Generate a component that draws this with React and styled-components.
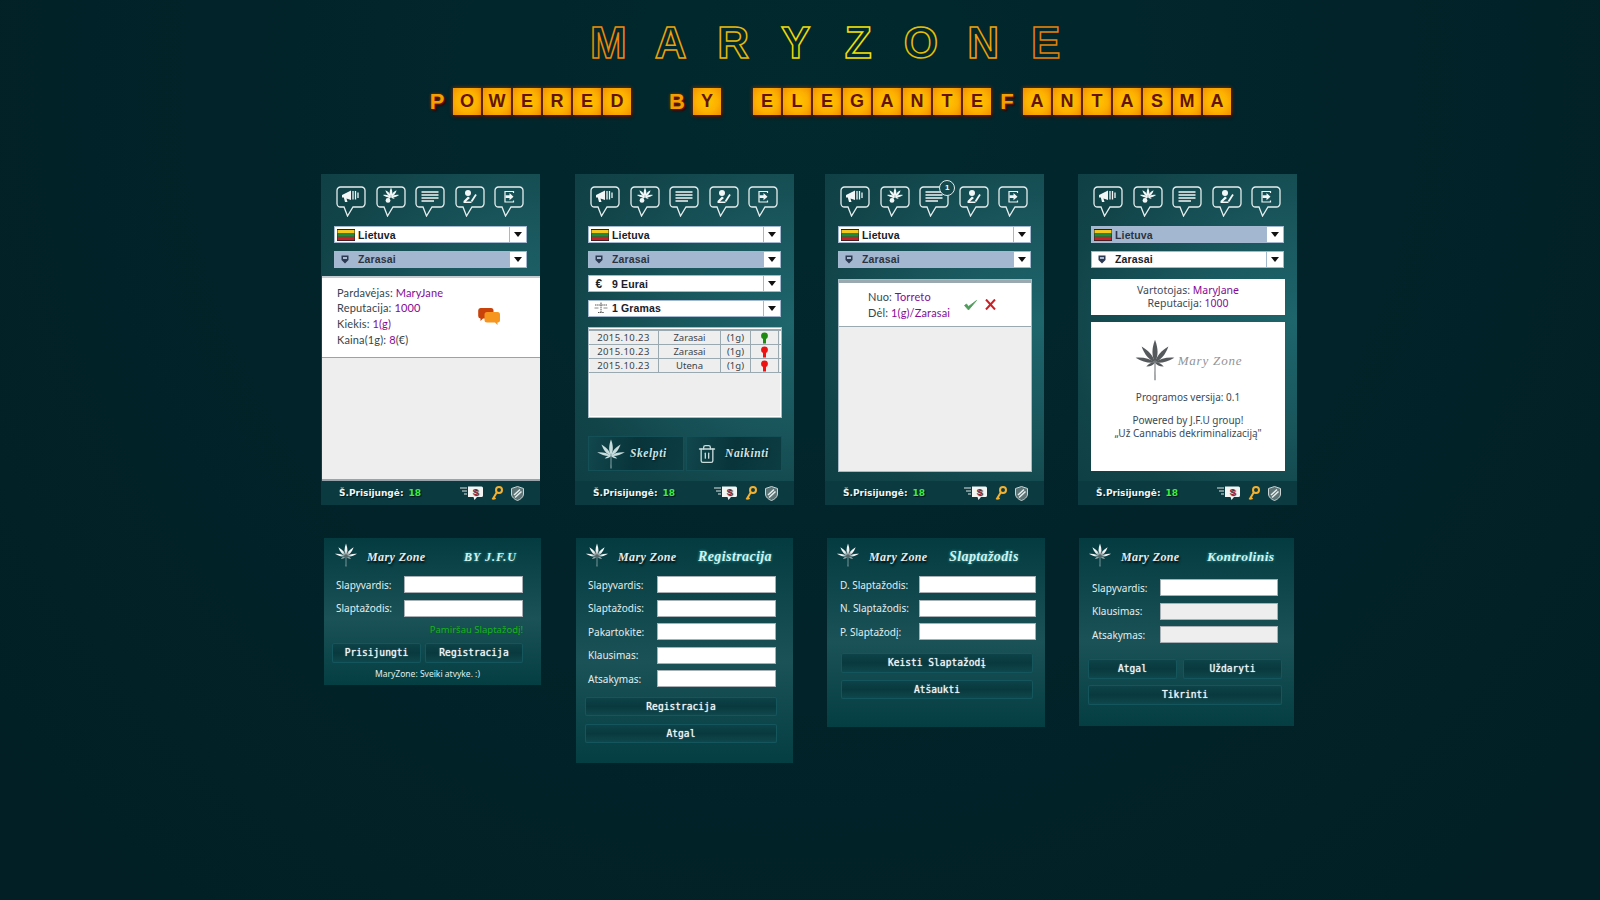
import React from 'react'
import styled, { createGlobalStyle } from 'styled-components'
import { Trash2 } from 'lucide-react'

const GlobalStyle = createGlobalStyle`
  html, body {
    margin: 0;
    padding: 0;
    background: #01252a;
  }
  * {
    box-sizing: border-box;
  }
`

const Page = styled.div`
  width: 1600px;
  height: 900px;
  overflow: hidden;
  padding-top: 27px;
  background: radial-gradient(ellipse at 50% 10%, #012a2e 0%, #01242a 45%, #011f24 100%);
  font-family: 'Noto Sans', 'Liberation Sans', sans-serif;
`

/* ---------- banner ---------- */

const TitleRow = styled.div`
  display: flex;
  height: 32px;
  padding-left: 577px;
`

const TitleLetter = styled.span`
  width: 62.5px;
  text-align: center;
  font-family: 'Liberation Sans', sans-serif;
  font-weight: 700;
  font-size: 44px;
  line-height: 32px;
  color: transparent;
  -webkit-text-stroke: 1.5px ${(p) => p.$color};
`

const SubRow = styled.div`
  display: flex;
  height: 27px;
  margin-top: 29px;
  padding-left: 422px;
  font-family: 'Liberation Sans', sans-serif;
  font-weight: 700;
`

const Cell = styled.span`
  width: 30px;
  display: flex;
  justify-content: center;
`

const Tile = styled.span`
  width: 28px;
  height: 27px;
  text-align: center;
  font-size: 18px;
  line-height: 27px;
  color: #641300;
  background: radial-gradient(circle at 50% 50%, #ffc600 0%, #fdb000 55%, #f09000 100%);
  box-shadow: 0 0 4px #a83200, 1px 2px 3px #320000;
`

const BareLetter = styled.span`
  font-size: 22px;
  line-height: 27px;
  color: #f4a000;
  text-shadow: 1px 1px 0 #641300, 0 0 3px #a83200, 2px 2px 2px #320000;
`

/* ---------- shared layout ---------- */

const CardRow = styled.div`
  display: grid;
  grid-template-columns: ${(p) => p.$cols};
  align-items: start;
  margin-top: ${(p) => p.$top}px;
  padding-left: ${(p) => p.$left}px;
`

const Phone = styled.div`
  display: flex;
  flex-direction: column;
  width: 219px;
  height: 331px;
  padding-top: 12px;
  background: radial-gradient(ellipse at 100% 45%, #1e656c 0%, #19565c 40%, #114449 75%, #0e3e43 100%);
`

const IconRow = styled.div`
  display: flex;
  gap: 9.6px;
  padding-left: 15px;
  height: 31px;
`

const BubbleWrap = styled.div`
  position: relative;
  width: 30px;
  height: 31px;
`

const Badge = styled.span`
  position: absolute;
  top: -6px;
  right: -6px;
  width: 16px;
  height: 16px;
  border-radius: 50%;
  background: #14494e;
  border: 1.5px solid #dfe9e9;
  color: #fff;
  font: 700 8px/13px 'Liberation Sans', sans-serif;
  text-align: center;
`

const Selects = styled.div`
  display: flex;
  flex-direction: column;
  gap: 7.5px;
  margin: 9px 0 0 13px;
  width: 193px;
`

const SelectBox = styled.div`
  display: flex;
  height: 17px;
  border: 1.5px solid #a4b9d0;
  background: #fff;
`

const SelectValue = styled.div`
  flex: 1;
  display: flex;
  align-items: center;
  gap: 3px;
  padding-left: ${(p) => (p.$hasFlag ? 2 : 5)}px;
  background: ${(p) => (p.$selected ? '#a3b8d0' : '#fff')};
  border-right: 1.5px solid #a4b9d0;
  color: ${(p) => (p.$selected ? '#2c3340' : '#1a2028')};
  font: 700 10.5px 'Liberation Sans', sans-serif;
  letter-spacing: 0.15px;
`

const SelectIcon = styled.span`
  display: flex;
  justify-content: center;
  align-items: center;
  width: ${(p) => p.$w}px;
  margin-right: ${(p) => p.$gap}px;
  color: #222;
  font-size: 12px;
`

const Arrow = styled.div`
  display: flex;
  align-items: center;
  justify-content: center;
  width: 16px;
  &::after {
    content: '';
    border-left: 4.5px solid transparent;
    border-right: 4.5px solid transparent;
    border-top: 5px solid #111;
  }
`

const Footer = styled.div`
  display: flex;
  align-items: center;
  height: 24px;
  margin-top: auto;
  padding: 0 16px 0 18px;
  background: #0b3b40;
  color: #eef5f5;
  font: 700 9px 'DejaVu Sans', sans-serif;
  text-shadow: 1px 1px 1px #02181b;
`

const Online = styled.span`
  margin-left: 5px;
  color: #3df03d;
`

const FooterIcons = styled.div`
  display: flex;
  align-items: center;
  gap: 8px;
  margin-left: auto;
`

/* ---------- phone bodies ---------- */

const ListBody = styled.div`
  flex: 1;
  display: flex;
  flex-direction: column;
  margin: 8.5px 0 0 1px;
  background: #eeeeee;
  border-top: 2px solid #c4ccd2;
  border-bottom: 2px solid #97a4ab;
`

const Offer = styled.div`
  display: flex;
  align-items: center;
  height: 80px;
  padding: 0 40px 3px 15px;
  background: #fff;
  border-bottom: 1px solid #97a4ab;
`

const ScriptText = styled.div`
  font: 400 11px/15.7px 'Lato', 'Noto Sans', sans-serif;
  letter-spacing: 0.15px;
  color: #33464f;
`

const Accent = styled.span`
  color: #860a96;
`

const SideIcon = styled.div`
  margin-left: auto;
  display: flex;
`

const Table = styled.div`
  margin: 10.5px 12px 0 13px;
  height: 91px;
  padding-top: 1px;
  background: #eeeeee;
  border: 1.5px solid #a9bac6;
  box-shadow: inset 0 0 0 1px #fff;
`

const TableRow = styled.div`
  display: grid;
  grid-template-columns: 70px 62px 30px 28px;
  height: ${(p) => (p.$first ? 16 : 14)}px;
  border-top: ${(p) => (p.$first ? '2px solid #9aa8b0' : 'none')};
  border-bottom: 1.5px solid #9aa8b0;
`

const TableCell = styled.div`
  display: flex;
  align-items: center;
  justify-content: center;
  border-right: 1.5px solid #9aa8b0;
  color: #3a4248;
  font-size: 9.5px;
  letter-spacing: ${(p) => (p.$wide ? 0.4 : 0)}px;
`

const ActionRow = styled.div`
  display: grid;
  grid-template-columns: 96px 96px;
  gap: 2px;
  margin: 18px 0 0 13px;
`

const ActionButton = styled.div`
  display: flex;
  align-items: center;
  gap: ${(p) => p.$gap}px;
  height: 35px;
  padding-left: ${(p) => p.$pad}px;
  background: linear-gradient(100deg, #11474d 0%, #08343a 50%, #0c3d43 100%);
  border: 1px solid #155057;
  color: #cfe4e4;
`

const ButtonScript = styled.span`
  font: italic 700 11.5px 'Liberation Serif', serif;
  letter-spacing: 0.6px;
  text-shadow: 1px 1px 2px #021c20;
  margin-bottom: 2px;
`

const RequestPanel = styled.div`
  flex: 1;
  display: flex;
  flex-direction: column;
  margin: 11.5px 12px 9px 13px;
  background: #eeeeee;
  border: 1px solid #a9bac6;
`

const Request = styled.div`
  display: flex;
  align-items: center;
  height: 47px;
  padding-left: 29px;
  background: #fff;
  border-top: 3px solid #9aa8b0;
  border-bottom: 1.5px solid #9aa8b0;
`

const RequestIcons = styled.div`
  display: flex;
  gap: 8px;
  margin: 0 0 0 14px;
`

const AboutColumn = styled.div`
  flex: 1;
  display: flex;
  flex-direction: column;
  gap: 7px;
  margin: 11.5px 12px 9px 13px;
`

const WhiteBox = styled.div`
  display: flex;
  flex-direction: column;
  align-items: center;
  justify-content: ${(p) => (p.$center ? 'center' : 'flex-start')};
  height: ${(p) => p.$h}px;
  padding-top: ${(p) => p.$top || 0}px;
  background: #fff;
  color: #3b4a55;
  font-size: 10.5px;
  line-height: 13.5px;
`

const AboutLogo = styled.div`
  display: flex;
  align-items: center;
  gap: 2px;
  height: 39px;
  padding-right: 0;
`

const AboutName = styled.span`
  font: italic 400 13px 'Liberation Serif', serif;
  letter-spacing: 0.8px;
  color: #8f9497;
  margin-top: 3px;
`

const AboutLine = styled.div`
  margin-top: ${(p) => p.$top}px;
  font-size: 10px;
`

/* ---------- login style cards ---------- */

const MiniCard = styled.div`
  width: ${(p) => p.$w}px;
  height: ${(p) => p.$h}px;
  background: linear-gradient(180deg, #033b40 0%, #1a5257 55%, #053e42 100%);
`

const MiniHead = styled.div`
  display: flex;
  align-items: center;
  height: ${(p) => p.$h}px;
  padding: 0 0 ${(p) => p.$h - 38}px ${(p) => p.$left}px;
  & > svg {
    margin-bottom: 5px;
  }
`

const BrandName = styled.span`
  margin-left: 9px;
  width: ${(p) => p.$w}px;
  font: italic 700 12px 'Liberation Serif', serif;
  letter-spacing: 0.4px;
  color: #e5ecec;
  text-shadow: 1px 2px 2px #010f11;
`

const MiniTitle = styled.span`
  font: italic 700 ${(p) => p.$size}px 'Liberation Serif', serif;
  letter-spacing: ${(p) => p.$spacing}px;
  color: #d4f2ef;
  text-shadow: 0 0 3px #33b5b5;
`

const Form = styled.div`
  display: flex;
  flex-direction: column;
  gap: 6.5px;
  padding-left: ${(p) => p.$left}px;
`

const FormRow = styled.div`
  display: grid;
  grid-template-columns: ${(p) => p.$label}px ${(p) => p.$input}px;
  align-items: center;
  height: 17px;
`

const Label = styled.span`
  color: #e2eeee;
  font-size: 10px;
`

const Input = styled.input`
  width: 100%;
  height: 17px;
  padding: 0;
  border: 1px solid #a9b0b5;
  border-radius: 0;
  background: ${(p) => (p.disabled ? '#eeeeee' : '#fff')};
`

const Forgot = styled.div`
  height: 14px;
  margin-top: 6px;
  padding-right: 18px;
  text-align: right;
  color: #17b317;
  font-size: 9.5px;
  line-height: 14px;
`

const ButtonStack = styled.div`
  display: grid;
  grid-template-columns: ${(p) => p.$cols};
  gap: ${(p) => p.$gap}px;
  margin-top: ${(p) => p.$top}px;
  padding-left: ${(p) => p.$left}px;
`

const WideButton = styled.div`
  grid-column: ${(p) => (p.$full ? '1 / -1' : 'auto')};
  height: ${(p) => p.$h}px;
  text-align: center;
  background: linear-gradient(180deg, #0d444a 0%, #08393e 50%, #10494e 100%);
  box-shadow: inset 0 0 0 1px #15565c;
  border-radius: 2px;
  color: #eef5f5;
  font: 400 9.6px/${(p) => p.$h}px 'DejaVu Sans Mono', monospace;
  text-shadow: 0 0 1px #eef5f5;
`

const Welcome = styled.div`
  margin-top: 5px;
  text-align: center;
  color: #dfeeee;
  font-size: 8.5px;
  padding-right: 10px;
`

/* ---------- drawings ---------- */

const blades = [
  [0, 1, 0.15],
  [-40, 0.92, 0.13],
  [40, 0.92, 0.13],
  [-76, 0.88, 0.11],
  [76, 0.88, 0.11],
  [-114, 0.42, 0.08],
  [114, 0.42, 0.08],
]

const bladePath = (len, w) =>
  `M0 0C${w} ${-len * 0.3} ${w} ${-len * 0.6} 0 ${-len}C${-w} ${-len * 0.6} ${-w} ${-len * 0.3} 0 0Z`

const Leaf = ({ size, fill = '#55595c', silver }) => (
  <svg width={size} height={size} viewBox="-50 -56 100 100">
    {silver && (
      <defs>
        <radialGradient id="leafSilver" gradientUnits="userSpaceOnUse" cx="0" cy="0" r="50">
          <stop offset="0" stopColor="#4d5456" />
          <stop offset="0.45" stopColor="#e9eeee" />
          <stop offset="1" stopColor="#ffffff" />
        </radialGradient>
      </defs>
    )}
    {blades.map(([angle, len, w]) => (
      <path
        key={angle}
        transform={`rotate(${angle})`}
        d={bladePath(54 * len, 54 * w)}
        fill={silver ? 'url(#leafSilver)' : fill}
      />
    ))}
    <path d="M-1 0L1 0L1.2 42L-1.2 42Z" fill={silver ? '#dfe6e6' : fill} />
  </svg>
)

const glyphs = {
  megaphone: (
    <>
      <path d="M6 9L15 4.5V14L10.5 12.5L11.5 16H9L7.8 11.6L6 11.5Z" fill="#f2f6f6" />
      <path d="M17 5V13.5M19.5 5V13.5M22 6.5V12" stroke="#f2f6f6" strokeWidth="1.3" />
    </>
  ),
  leaf: (
    <g transform="translate(15 11)">
      {blades.map(([angle, len, w]) => (
        <path key={angle} transform={`rotate(${angle})`} d={bladePath(9.5 * len, 12 * w)} fill="#f2f6f6" />
      ))}
      <circle cx="-3" cy="3.4" r="2.4" fill="#f2f6f6" />
    </g>
  ),
  lines: <path d="M6.5 6H23.5M6.5 9H23.5M6.5 12H23.5M6.5 15H19" stroke="#f2f6f6" strokeWidth="1.3" />,
  person: (
    <>
      <circle cx="13" cy="7" r="3" fill="#f2f6f6" />
      <path d="M13 10.5L15 12L11 15.5H16.5V17H8.5V15Z" fill="#f2f6f6" />
      <path d="M21 8.5L16.5 15.5" stroke="#f2f6f6" strokeWidth="1.8" />
    </>
  ),
  exit: (
    <>
      <path d="M19.5 7V5.5H11V16H19.5V14.5" fill="none" stroke="#f2f6f6" strokeWidth="1.2" />
      <path d="M11.5 9.2H15.5V7L19.5 10.7L15.5 14.2V12H11.5Z" fill="#f2f6f6" />
    </>
  ),
}

const Bubble = ({ glyph, badge }) => (
  <BubbleWrap>
    <svg width="30" height="31" viewBox="0 0 30 31">
      <path
        d="M4.5 1H25.5A3.5 3.5 0 0 1 29 4.5V17.5A3.5 3.5 0 0 1 25.5 21H17L11.5 30L8 21H4.5A3.5 3.5 0 0 1 1 17.5V4.5A3.5 3.5 0 0 1 4.5 1Z"
        fill="none"
        stroke="#e6eeee"
        strokeWidth="1.3"
      />
      {glyphs[glyph]}
    </svg>
    {badge && <Badge>{badge}</Badge>}
  </BubbleWrap>
)

const FlagIcon = () => (
  <svg width="18" height="12" viewBox="0 0 18 12">
    <rect width="18" height="12" fill="#222" />
    <rect x="0.5" y="1" width="17" height="3.4" fill="#f2c81e" />
    <rect x="0.5" y="4.4" width="17" height="3.4" fill="#1e8a3c" />
    <rect x="0.5" y="7.8" width="17" height="3.4" fill="#c8202a" />
  </svg>
)

const CityShield = () => (
  <svg width="8" height="9" viewBox="0 0 8 9">
    <path d="M0.5 0.5H7.5V5L4 8.5L0.5 5Z" fill="#2b3a52" />
    <rect x="2" y="2" width="4" height="2" fill="#a9bcd2" />
  </svg>
)

const ScaleIcon = () => (
  <svg width="14" height="12" viewBox="0 0 14 12">
    <path d="M7 0.5V10M4 10.5H10M1 3H13" stroke="#555" strokeWidth="1" strokeDasharray="1.5 0.6" fill="none" />
    <path d="M0.5 6H4.5M9.5 6H13.5" stroke="#888" strokeWidth="1" />
  </svg>
)

const ChatIcon = () => (
  <svg width="22" height="19" viewBox="0 0 22 19">
    <path d="M2.5 1H13A2.5 2.5 0 0 1 15.5 3.5V9A2.5 2.5 0 0 1 13 11.5H5L2.5 14V11.5A2.5 2.5 0 0 1 0.2 9V3.5A2.5 2.5 0 0 1 2.5 1Z" fill="#c8420a" />
    <path d="M9 5H19.5A2.5 2.5 0 0 1 22 7.5V13A2.5 2.5 0 0 1 19.5 15.5V18L17 15.5H9A2.5 2.5 0 0 1 6.5 13V7.5A2.5 2.5 0 0 1 9 5Z" fill="#f7961e" />
  </svg>
)

const SpeedChat = () => (
  <svg width="23" height="15" viewBox="0 0 23 15">
    <path d="M0 2H7M2 5H7M4 8H7" stroke="#dfe6e6" strokeWidth="1.2" />
    <path d="M8 0.5H21.5A1.5 1.5 0 0 1 23 2V9.5A1.5 1.5 0 0 1 21.5 11H17L14.5 14L13.5 11H8Z" fill="#f3f5f5" />
    <text x="15.5" y="9" textAnchor="middle" fontSize="9" fontWeight="700" fontFamily="Liberation Sans" fill="#b0182a">S</text>
  </svg>
)

const KeyIcon = () => (
  <svg width="12" height="15" viewBox="0 0 12 15">
    <circle cx="8" cy="4" r="3" fill="none" stroke="#f5b02e" strokeWidth="2" />
    <path d="M6 6L1.5 13.5M2.5 11.5L4.5 13" stroke="#f5b02e" strokeWidth="2" />
  </svg>
)

const ShieldIcon = () => (
  <svg width="13" height="15" viewBox="0 0 13 15">
    <path d="M6.5 0.5L12.5 2.5V8C12.5 11 9.5 13.5 6.5 14.5C3.5 13.5 0.5 11 0.5 8V2.5Z" fill="#5c7476" stroke="#c9d4d4" strokeWidth="1" />
    <path d="M3 9L9 3.5M4 11.5L10.5 5.5" stroke="#e6eeee" strokeWidth="1.5" />
  </svg>
)

const Lamp = ({ color }) => (
  <svg width="9" height="12" viewBox="0 0 9 12">
    <circle cx="4.5" cy="3.8" r="3.4" fill={color} />
    <rect x="3" y="6" width="3" height="5.5" fill={color} />
  </svg>
)

const CheckIcon = () => (
  <svg width="13" height="12" viewBox="0 0 13 12">
    <path d="M0.5 6.5L4.5 11L12.5 1.5L4.5 7.5L2.5 5Z" fill="#4f9c5c" stroke="#4f9c5c" strokeWidth="0.8" />
  </svg>
)

const CrossIcon = () => (
  <svg width="11" height="11" viewBox="0 0 11 11">
    <path d="M1 0.5L10 10.5M10 0.5L1 10.5" stroke="#cc2026" strokeWidth="2" />
  </svg>
)

/* ---------- composed parts ---------- */

const Select = ({ label, selected, icon, iconWidth = 10, iconGap = 5, flag }) => (
  <SelectBox>
    <SelectValue $selected={selected} $hasFlag={flag}>
      <SelectIcon $w={iconWidth} $gap={iconGap}>{icon}</SelectIcon>
      {label}
    </SelectValue>
    <Arrow />
  </SelectBox>
)

const PhoneTop = ({ badge, highlight, extra }) => (
  <>
    <IconRow>
      <Bubble glyph="megaphone" />
      <Bubble glyph="leaf" />
      <Bubble glyph="lines" badge={badge} />
      <Bubble glyph="person" />
      <Bubble glyph="exit" />
    </IconRow>
    <Selects>
      <Select
        label="Lietuva"
        flag
        selected={highlight === 'country'}
        icon={<FlagIcon />}
        iconWidth={18}
        iconGap={0}
      />
      <Select label="Zarasai" selected={highlight === 'city'} icon={<CityShield />} />
      {extra}
    </Selects>
  </>
)

const PhoneFooter = () => (
  <Footer>
    Š.Prisijungė:
    <Online>18</Online>
    <FooterIcons>
      <SpeedChat />
      <KeyIcon />
      <ShieldIcon />
    </FooterIcons>
  </Footer>
)

const orders = [
  { date: '2015.10.23', city: 'Zarasai', color: '#1f8a12' },
  { date: '2015.10.23', city: 'Zarasai', color: '#ee1111' },
  { date: '2015.10.23', city: 'Utena', color: '#ee1111' },
]

const titleLetters = [
  ['M', '#ee8a08'],
  ['A', '#f0a208'],
  ['R', '#e8b808'],
  ['Y', '#f0d808'],
  ['Z', '#f2e006'],
  ['O', '#e6c004'],
  ['N', '#eea206'],
  ['E', '#e08008'],
]

const subtitle = 'pOWERED bY ELEGANTEfANTASMA'

const MiniBrand = ({ head = 38, left = 10, nameWidth, title, size = 14, spacing = 0.4 }) => (
  <MiniHead $h={head} $left={left}>
    <Leaf size={24} silver />
    <BrandName $w={nameWidth}>Mary Zone</BrandName>
    <MiniTitle $size={size} $spacing={spacing}>{title}</MiniTitle>
  </MiniHead>
)

const Fields = ({ left, label, input, rows }) => (
  <Form $left={left}>
    {rows.map((r) => (
      <FormRow key={r.name} $label={label} $input={input}>
        <Label>{r.name}</Label>
        <Input disabled={r.off} />
      </FormRow>
    ))}
  </Form>
)

export default function App() {
  return (
    <Page>
      <GlobalStyle />
      <TitleRow>
        {titleLetters.map(([ch, color]) => (
          <TitleLetter key={ch} $color={color}>{ch}</TitleLetter>
        ))}
      </TitleRow>
      <SubRow>
        {subtitle.split('').map((ch, i) => (
          <Cell key={i}>
            {ch === ' ' ? null : ch === ch.toLowerCase() ? (
              <BareLetter>{ch.toUpperCase()}</BareLetter>
            ) : (
              <Tile>{ch}</Tile>
            )}
          </Cell>
        ))}
      </SubRow>

      <CardRow $cols="254px 250px 253px 219px" $top={59} $left={321}>
        <Phone>
          <PhoneTop highlight="city" />
          <ListBody>
            <Offer>
              <ScriptText>
                Pardavėjas: <Accent>MaryJane</Accent>
                <br />
                Reputacija: <Accent>1000</Accent>
                <br />
                Kiekis: <Accent>1(g)</Accent>
                <br />
                Kaina(1g): <Accent>8</Accent>(€)
              </ScriptText>
              <SideIcon>
                <ChatIcon />
              </SideIcon>
            </Offer>
          </ListBody>
          <PhoneFooter />
        </Phone>

        <Phone>
          <PhoneTop
            highlight="city"
            extra={
              <>
                <Select label="9 Eurai" icon="€" />
                <Select label="1 Gramas" icon={<ScaleIcon />} iconWidth={14} iconGap={1} />
              </>
            }
          />
          <Table>
            {orders.map((o, i) => (
              <TableRow key={i} $first={i === 0}>
                <TableCell $wide>{o.date}</TableCell>
                <TableCell>{o.city}</TableCell>
                <TableCell>(1g)</TableCell>
                <TableCell>
                  <Lamp color={o.color} />
                </TableCell>
              </TableRow>
            ))}
          </Table>
          <ActionRow>
            <ActionButton $pad={7} $gap={4}>
              <Leaf size={30} fill="#c9dcdc" />
              <ButtonScript>Skelpti</ButtonScript>
            </ActionButton>
            <ActionButton $pad={10} $gap={8}>
              <Trash2 size={20} strokeWidth={1.6} color="#c9dcdc" />
              <ButtonScript>Naikinti</ButtonScript>
            </ActionButton>
          </ActionRow>
          <PhoneFooter />
        </Phone>

        <Phone>
          <PhoneTop highlight="city" badge="1" />
          <RequestPanel>
            <Request>
              <ScriptText>
                Nuo: <Accent>Torreto</Accent>
                <br />
                Dėl: <Accent>1(g)/Zarasai</Accent>
              </ScriptText>
              <RequestIcons>
                <CheckIcon />
                <CrossIcon />
              </RequestIcons>
            </Request>
          </RequestPanel>
          <PhoneFooter />
        </Phone>

        <Phone>
          <PhoneTop highlight="country" />
          <AboutColumn>
            <WhiteBox $h={36} $center>
              <span>
                Vartotojas: <Accent>MaryJane</Accent>
              </span>
              <span>
                Reputacija: <Accent>1000</Accent>
              </span>
            </WhiteBox>
            <WhiteBox $h={149} $top={18}>
              <AboutLogo>
                <Leaf size={42} />
                <AboutName>Mary Zone</AboutName>
              </AboutLogo>
              <AboutLine $top={12}>Programos versija: 0.1</AboutLine>
              <AboutLine $top={9}>Powered by J.F.U group!</AboutLine>
              <AboutLine $top={0}>„Už Cannabis dekriminalizaciją"</AboutLine>
            </WhiteBox>
          </AboutColumn>
          <PhoneFooter />
        </Phone>
      </CardRow>

      <CardRow $cols="252px 251px 252px 215px" $top={33} $left={324}>
        <MiniCard $w={217} $h={147}>
          <MiniBrand nameWidth={97} title="BY J.F.U" size={12} spacing={1} />
          <Fields
            left={12}
            label={68}
            input={119}
            rows={[{ name: 'Slapyvardis:' }, { name: 'Slaptažodis:' }]}
          />
          <Forgot>Pamiršau Slaptažodį!</Forgot>
          <ButtonStack $cols="89px 98px" $gap={4} $top={6} $left={8}>
            <WideButton $h={20}>Prisijungti</WideButton>
            <WideButton $h={20}>Registracija</WideButton>
          </ButtonStack>
          <Welcome>MaryZone: Sveiki atvyke. :)</Welcome>
        </MiniCard>

        <MiniCard $w={217} $h={225}>
          <MiniBrand left={9} nameWidth={80} title="Registracija" />
          <Fields
            left={12}
            label={69}
            input={119}
            rows={[
              { name: 'Slapyvardis:' },
              { name: 'Slaptažodis:' },
              { name: 'Pakartokite:' },
              { name: 'Klausimas:' },
              { name: 'Atsakymas:' },
            ]}
          />
          <ButtonStack $cols="192px" $gap={8} $top={10} $left={9}>
            <WideButton $h={19}>Registracija</WideButton>
            <WideButton $h={19}>Atgal</WideButton>
          </ButtonStack>
        </MiniCard>

        <MiniCard $w={218} $h={189}>
          <MiniBrand left={9} nameWidth={80} title="Slaptažodis" />
          <Fields
            left={13}
            label={79}
            input={117}
            rows={[
              { name: 'D. Slaptažodis:' },
              { name: 'N. Slaptažodis:' },
              { name: 'P. Slaptažodį:' },
            ]}
          />
          <ButtonStack $cols="192px" $gap={7} $top={13} $left={14}>
            <WideButton $h={20}>Keisti Slaptažodį</WideButton>
            <WideButton $h={19}>Atšaukti</WideButton>
          </ButtonStack>
        </MiniCard>

        <MiniCard $w={215} $h={188}>
          <MiniBrand head={41} left={9} nameWidth={86} title="Kontrolinis" size={13.5} />
          <Fields
            left={13}
            label={68}
            input={118}
            rows={[
              { name: 'Slapyvardis:' },
              { name: 'Klausimas:', off: true },
              { name: 'Atsakymas:', off: true },
            ]}
          />
          <ButtonStack $cols="89px 99px" $gap={6} $top={16} $left={9}>
            <WideButton $h={20}>Atgal</WideButton>
            <WideButton $h={20}>Uždaryti</WideButton>
            <WideButton $h={20} $full>Tikrinti</WideButton>
          </ButtonStack>
        </MiniCard>
      </CardRow>
    </Page>
  )
}
